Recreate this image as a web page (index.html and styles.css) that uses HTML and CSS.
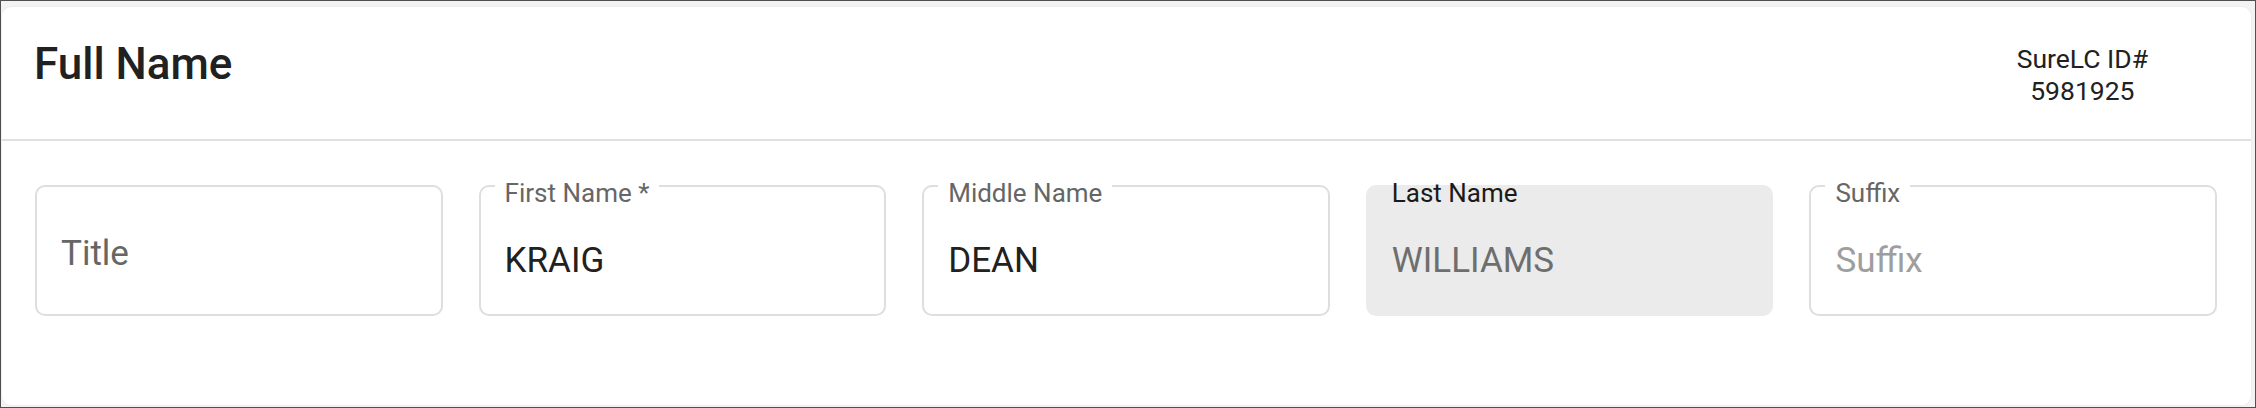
FILE: index.html
```html
<!DOCTYPE html>
<html lang="en">
<head>
<meta charset="utf-8">
<title>Full Name</title>
<link rel="stylesheet" href="styles.css">
</head>
<body>
<div class="frame">
  <section class="card">
    <header class="card-header">
      <h1 class="card-title">Full Name</h1>
      <div class="sure-id">
        <div>SureLC ID#</div>
        <div>5981925</div>
      </div>
    </header>
    <div class="fields">
      <div class="field field-empty">
        <div class="field-placeholder-label">Title</div>
      </div>
      <div class="field">
        <span class="field-label">First Name *</span>
        <div class="field-value">KRAIG</div>
      </div>
      <div class="field">
        <span class="field-label">Middle Name</span>
        <div class="field-value">DEAN</div>
      </div>
      <div class="field field-disabled">
        <span class="field-label">Last Name</span>
        <div class="field-value">WILLIAMS</div>
      </div>
      <div class="field">
        <span class="field-label">Suffix</span>
        <div class="field-value field-placeholder">Suffix</div>
      </div>
    </div>
  </section>
</div>
</body>
</html>
```

FILE: styles.css
```css
html, body {
  margin: 0;
  padding: 0;
}

body {
  font-family: Roboto, "Liberation Sans", Arial, sans-serif;
  color: #212121;
  background: #ffffff;
}

.frame {
  width: 2256px;
  height: 408px;
  box-sizing: border-box;
  border: 1px solid #505050;
  background: #f3f3f3;
  padding: 6px 4px 2px 1px;
  display: flex;
  flex-direction: column;
}

.card {
  flex: 1;
  background: #ffffff;
  border-radius: 9px;
  box-shadow: 0 0 2px rgba(0, 0, 0, 0.08);
  display: flex;
  flex-direction: column;
}

.card-header {
  height: 134px;
  box-sizing: border-box;
  display: flex;
  justify-content: space-between;
  align-items: flex-start;
  padding: 31px 103px 0 32px;
  border-bottom: 2px solid #e0e0e0;
}

.card-title {
  margin: 0;
  font-size: 44px;
  font-weight: 500;
  line-height: normal;
  color: #212121;
}

.sure-id {
  margin-top: 5px;
  font-size: 26.5px;
  line-height: 32px;
  text-align: center;
  color: #212121;
}

.fields {
  display: grid;
  grid-template-columns: repeat(5, 1fr);
  column-gap: 36px;
  padding: 44px 34px 0 33px;
}

.field {
  position: relative;
  height: 131px;
  box-sizing: border-box;
  border: 2px solid #dedede;
  border-radius: 10px;
  padding: 54px 24px 0 24px;
}

.field-label {
  position: absolute;
  top: -9px;
  left: 14px;
  padding: 0 10px;
  background: #ffffff;
  font-size: 26px;
  line-height: 30px;
  color: #666666;
  white-space: nowrap;
}

.field-value {
  font-size: 35px;
  line-height: 40px;
  color: #212121;
}

.field-placeholder {
  color: #9e9e9e;
}

.field-empty {
  padding-top: 47px;
}

.field-placeholder-label {
  font-size: 35px;
  line-height: 40px;
  color: #666666;
}

.field-disabled {
  border-color: #ebebeb;
  background: #ebebeb;
}

.field-disabled .field-label {
  background: transparent;
  color: #1a1a1a;
}

.field-disabled .field-value {
  color: #6e6e6e;
}
```
